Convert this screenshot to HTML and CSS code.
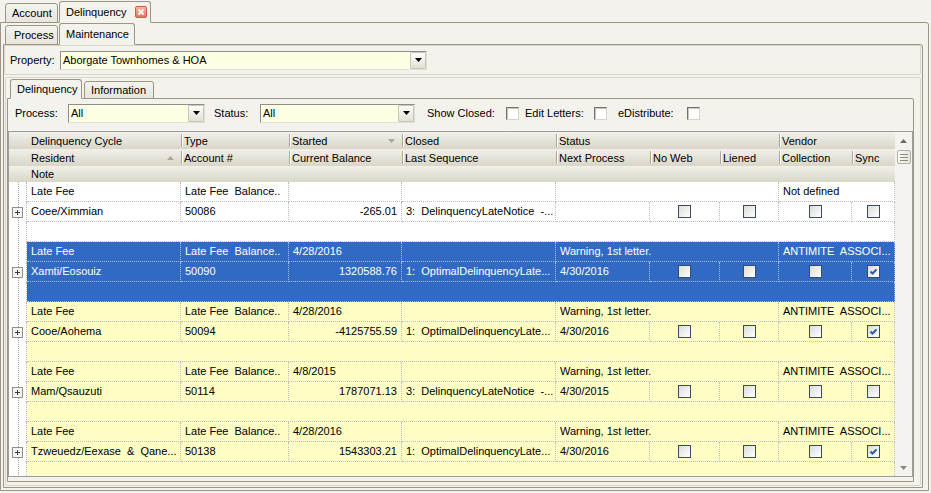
FILE: index.html
```html
<!DOCTYPE html>
<html>
<head>
<meta charset="utf-8">
<title>Delinquency</title>
<link rel="stylesheet" href="styles.css">
</head>
<body>
<div class="app">
  <div class="tabstrip t1">
    <div class="tab tab-account">Account</div>
    <div class="tab sel tab-delinq">Delinquency<span class="close"><svg width="12" height="12" viewBox="0 0 12 12"><defs><linearGradient id="cg" x1="0" y1="0" x2="0" y2="1"><stop offset="0" stop-color="#f6b8a8"/><stop offset="1" stop-color="#e2735e"/></linearGradient></defs><rect x="0.5" y="0.5" width="11" height="11" rx="1.5" fill="url(#cg)" stroke="#c95f4b"/><path d="M3.5 3.5L8.5 8.5M8.5 3.5L3.5 8.5" stroke="#fff" stroke-width="1.8"/></svg></span></div>
  </div>
  <div class="panel p1">
    <div class="tabstrip t2">
      <div class="tab tab-process">Process</div>
      <div class="tab sel tab-maint">Maintenance</div>
    </div>
    <div class="panel p2">
      <div class="propbox">
        <span class="lbl lbl-prop">Property:</span>
        <div class="combo combo-prop"><span class="combo-text">Aborgate Townhomes &amp; HOA</span><span class="drop"><svg width="7" height="4" viewBox="0 0 7 4"><path d="M0 0H7L3.5 4Z" fill="#000"/></svg></span></div>
      </div>
      <div class="lowerbox">
        <div class="tabstrip t3">
          <div class="tab sel tab-dl">Delinquency</div>
          <div class="tab tab-info">Information</div>
        </div>
        <div class="panel p3">
          <div class="filters">
            <span class="lbl lbl-process">Process:</span>
            <div class="combo combo-process"><span class="combo-text">All</span><span class="drop"><svg width="7" height="4" viewBox="0 0 7 4"><path d="M0 0H7L3.5 4Z" fill="#000"/></svg></span></div>
            <span class="lbl lbl-status">Status:</span>
            <div class="combo combo-status"><span class="combo-text">All</span><span class="drop"><svg width="7" height="4" viewBox="0 0 7 4"><path d="M0 0H7L3.5 4Z" fill="#000"/></svg></span></div>
            <span class="lbl lbl-closed">Show Closed:</span>
            <span class="fchk"></span>
            <span class="lbl lbl-edit">Edit Letters:</span>
            <span class="fchk"></span>
            <span class="lbl lbl-edist">eDistribute:</span>
            <span class="fchk"></span>
          </div>
          <div class="grid">
            <div class="gmain">
              <div class="hrow">
                <div class="hc"></div>
                <div class="hc first">Delinquency Cycle</div>
                <div class="hc sep">Type</div>
                <div class="hc sep">Started<svg class="sort" width="7" height="4" viewBox="0 0 7 4"><path d="M0 0H7L3.5 4Z" fill="#aca899"/></svg></div>
                <div class="hc sep">Closed</div>
                <div class="hc sep s3">Status</div>
                <div class="hc sep s2">Vendor</div>
              </div>
              <div class="hrow">
                <div class="hc"></div>
                <div class="hc first">Resident<svg class="sort" width="7" height="4" viewBox="0 0 7 4"><path d="M0 4H7L3.5 0Z" fill="#aca899"/></svg></div>
                <div class="hc sep">Account #</div>
                <div class="hc sep">Current Balance</div>
                <div class="hc sep">Last Sequence</div>
                <div class="hc sep">Next Process</div>
                <div class="hc sep">No Web</div>
                <div class="hc sep">Liened</div>
                <div class="hc sep">Collection</div>
                <div class="hc sep">Sync</div>
              </div>
              <div class="hrow hrow3">
                <div class="hc"></div>
                <div class="hc first s9">Note</div>
              </div>

              <div class="rec">
                <div class="rrow">
                  <div class="ind"></div>
                  <div class="c">Late Fee</div>
                  <div class="c">Late Fee&nbsp; Balance..</div>
                  <div class="c"></div>
                  <div class="c"></div>
                  <div class="c s3"></div>
                  <div class="c s2">Not defined</div>
                </div>
                <div class="rrow">
                  <div class="ind"><svg class="plus" width="11" height="11" viewBox="0 0 11 11"><rect x="0.5" y="0.5" width="10" height="10" fill="#f4f4f0" stroke="#8f8f8f"/><path d="M3 5.5H8M5.5 3V8" stroke="#3a3a3a"/></svg></div>
                  <div class="c">Coee/Ximmian</div>
                  <div class="c">50086</div>
                  <div class="c num">-265.01</div>
                  <div class="c">3:&nbsp; DelinquencyLateNotice&nbsp; -...</div>
                  <div class="c"></div>
                  <div class="c cb"><span class="chk"></span></div>
                  <div class="c cb"><span class="chk"></span></div>
                  <div class="c cb"><span class="chk"></span></div>
                  <div class="c cb"><span class="chk"></span></div>
                </div>
                <div class="rrow">
                  <div class="ind"></div>
                  <div class="c s9"></div>
                </div>
              </div>

              <div class="rec sel">
                <div class="rrow">
                  <div class="ind"></div>
                  <div class="c">Late Fee</div>
                  <div class="c">Late Fee&nbsp; Balance..</div>
                  <div class="c">4/28/2016</div>
                  <div class="c"></div>
                  <div class="c s3">Warning, 1st letter.</div>
                  <div class="c s2">ANTIMITE&nbsp; ASSOCI...</div>
                </div>
                <div class="rrow">
                  <div class="ind"><svg class="plus" width="11" height="11" viewBox="0 0 11 11"><rect x="0.5" y="0.5" width="10" height="10" fill="#f4f4f0" stroke="#8f8f8f"/><path d="M3 5.5H8M5.5 3V8" stroke="#3a3a3a"/></svg></div>
                  <div class="c">Xamti/Eosouiz</div>
                  <div class="c">50090</div>
                  <div class="c num">1320588.76</div>
                  <div class="c">1:&nbsp; OptimalDelinquencyLate...</div>
                  <div class="c">4/30/2016</div>
                  <div class="c cb"><span class="chk"></span></div>
                  <div class="c cb"><span class="chk"></span></div>
                  <div class="c cb"><span class="chk"></span></div>
                  <div class="c cb"><span class="chk"><svg width="11" height="11" viewBox="0 0 11 11"><path d="M2.5 5.5L4.5 7.5L8.5 3.5" fill="none" stroke="#2a5cb8" stroke-width="2"/></svg></span></div>
                </div>
                <div class="rrow">
                  <div class="ind"></div>
                  <div class="c s9"></div>
                </div>
              </div>

              <div class="rec yel">
                <div class="rrow">
                  <div class="ind"></div>
                  <div class="c">Late Fee</div>
                  <div class="c">Late Fee&nbsp; Balance..</div>
                  <div class="c">4/28/2016</div>
                  <div class="c"></div>
                  <div class="c s3">Warning, 1st letter.</div>
                  <div class="c s2">ANTIMITE&nbsp; ASSOCI...</div>
                </div>
                <div class="rrow">
                  <div class="ind"><svg class="plus" width="11" height="11" viewBox="0 0 11 11"><rect x="0.5" y="0.5" width="10" height="10" fill="#f4f4f0" stroke="#8f8f8f"/><path d="M3 5.5H8M5.5 3V8" stroke="#3a3a3a"/></svg></div>
                  <div class="c">Cooe/Aohema</div>
                  <div class="c">50094</div>
                  <div class="c num">-4125755.59</div>
                  <div class="c">1:&nbsp; OptimalDelinquencyLate...</div>
                  <div class="c">4/30/2016</div>
                  <div class="c cb"><span class="chk"></span></div>
                  <div class="c cb"><span class="chk"></span></div>
                  <div class="c cb"><span class="chk"></span></div>
                  <div class="c cb"><span class="chk"><svg width="11" height="11" viewBox="0 0 11 11"><path d="M2.5 5.5L4.5 7.5L8.5 3.5" fill="none" stroke="#2a5cb8" stroke-width="2"/></svg></span></div>
                </div>
                <div class="rrow">
                  <div class="ind"></div>
                  <div class="c s9"></div>
                </div>
              </div>

              <div class="rec yel">
                <div class="rrow">
                  <div class="ind"></div>
                  <div class="c">Late Fee</div>
                  <div class="c">Late Fee&nbsp; Balance..</div>
                  <div class="c">4/8/2015</div>
                  <div class="c"></div>
                  <div class="c s3">Warning, 1st letter.</div>
                  <div class="c s2">ANTIMITE&nbsp; ASSOCI...</div>
                </div>
                <div class="rrow">
                  <div class="ind"><svg class="plus" width="11" height="11" viewBox="0 0 11 11"><rect x="0.5" y="0.5" width="10" height="10" fill="#f4f4f0" stroke="#8f8f8f"/><path d="M3 5.5H8M5.5 3V8" stroke="#3a3a3a"/></svg></div>
                  <div class="c">Mam/Qsauzuti</div>
                  <div class="c">50114</div>
                  <div class="c num">1787071.13</div>
                  <div class="c">3:&nbsp; DelinquencyLateNotice&nbsp; -...</div>
                  <div class="c">4/30/2015</div>
                  <div class="c cb"><span class="chk"></span></div>
                  <div class="c cb"><span class="chk"></span></div>
                  <div class="c cb"><span class="chk"></span></div>
                  <div class="c cb"><span class="chk"></span></div>
                </div>
                <div class="rrow">
                  <div class="ind"></div>
                  <div class="c s9"></div>
                </div>
              </div>

              <div class="rec yel">
                <div class="rrow">
                  <div class="ind"></div>
                  <div class="c">Late Fee</div>
                  <div class="c">Late Fee&nbsp; Balance..</div>
                  <div class="c">4/28/2016</div>
                  <div class="c"></div>
                  <div class="c s3">Warning, 1st letter.</div>
                  <div class="c s2">ANTIMITE&nbsp; ASSOCI...</div>
                </div>
                <div class="rrow">
                  <div class="ind"><svg class="plus" width="11" height="11" viewBox="0 0 11 11"><rect x="0.5" y="0.5" width="10" height="10" fill="#f4f4f0" stroke="#8f8f8f"/><path d="M3 5.5H8M5.5 3V8" stroke="#3a3a3a"/></svg></div>
                  <div class="c">Tzweuedz/Eexase&nbsp; &amp;&nbsp; Qane...</div>
                  <div class="c">50138</div>
                  <div class="c num">1543303.21</div>
                  <div class="c">1:&nbsp; OptimalDelinquencyLate...</div>
                  <div class="c">4/30/2016</div>
                  <div class="c cb"><span class="chk"></span></div>
                  <div class="c cb"><span class="chk"></span></div>
                  <div class="c cb"><span class="chk"></span></div>
                  <div class="c cb"><span class="chk"><svg width="11" height="11" viewBox="0 0 11 11"><path d="M2.5 5.5L4.5 7.5L8.5 3.5" fill="none" stroke="#2a5cb8" stroke-width="2"/></svg></span></div>
                </div>
                <div class="rrow">
                  <div class="ind"></div>
                  <div class="c s9"></div>
                </div>
              </div>
            </div>
            <div class="sb">
              <div class="sbbtn"><svg width="7" height="4" viewBox="0 0 7 4"><path d="M0 4H7L3.5 0Z" fill="#6f6d66"/></svg></div>
              <div class="thumb"><svg width="8" height="7" viewBox="0 0 8 7"><path d="M0 0.5H8M0 3.5H8M0 6.5H8" stroke="#8b887c"/></svg></div>
              <div class="sbspace"></div>
              <div class="sbbtn"><svg width="7" height="4" viewBox="0 0 7 4"><path d="M0 0H7L3.5 4Z" fill="#8b887c"/></svg></div>
            </div>
          </div>
        </div>
      </div>
    </div>
  </div>
</div>
</body>
</html>
```

FILE: styles.css
```css
* { box-sizing: border-box; }
html, body { margin: 0; padding: 0; }
body {
  background: #f3f2ec;
  font-family: "Liberation Sans", Arial, sans-serif;
  font-size: 11px;
  color: #000;
}
.app {
  width: 931px;
  height: 493px;
  overflow: hidden;
  background: #f3f2ec;
}

/* tabs */
.tabstrip {
  display: flex;
  align-items: flex-end;
  position: relative;
  z-index: 2;
  margin-bottom: -1px;
}
.tab {
  display: flex;
  align-items: center;
  border: 1px solid #9c9585;
  border-radius: 3px 3px 0 0;
  background: linear-gradient(#f4f3ee, #e7e5dc);
  white-space: nowrap;
  padding-left: 6px;
  padding-bottom: 1px;
}
.tab.sel {
  background: #f3f2ec;
  border-bottom-color: #f3f2ec;
}
.t1 { height: 23px; padding-left: 5px; }
.tab-account { width: 53px; height: 20px; }
.tab-delinq { width: 92px; height: 22px; margin-left: 1px; }
.close { margin-left: auto; margin-right: 3px; display: flex; }

.t2 { height: 22px; padding-left: 2px; }
.tab-process { width: 53px; height: 20px; padding-left: 8px; }
.tab-maint { width: 76px; height: 22px; margin-left: 1px; padding-bottom: 0; }

.t3 { height: 21px; padding-left: 3px; }
.tab-dl { width: 72px; height: 20px; }
.tab-info { width: 70px; height: 18px; margin-left: 2px; padding-bottom: 1px; }

/* panels */
.panel { border: 1px solid #9c9585; border-radius: 0 3px 0 0; }
.p1 {
  height: 469px;
  margin-right: 2px;
  padding: 0 5px 2px 2px;
}
.p2 { height: 444px; }
.propbox {
  height: 30px;
  display: flex;
  align-items: center;
  padding-left: 5px;
  border: 1px solid #d9d5c8;
  border-radius: 2px;
  margin: 0 1px 0 0;
}
.lowerbox {
  margin: 2px 1px 0 1px;
  height: 409px;
  border: 1px solid #d9d5c8;
  border-radius: 2px;
  padding: 0 6px 3px 1px;
}
.p3 { height: 384px; border-radius: 0 2px 0 0; }

/* labels & combos */
.lbl { white-space: nowrap; }
.lbl-prop { width: 50px; }
.combo {
  display: flex;
  align-items: stretch;
  height: 19px;
  border: 1px solid;
  border-color: #8e8d88 #e2dfd4 #e2dfd4 #8e8d88;
  background: #ffffe3;
}
.combo-text { padding-left: 2px; line-height: 17px; flex: 1; white-space: nowrap; }
.drop {
  width: 16px;
  border: 1px solid #c9c6b9;
  border-radius: 1px;
  background: linear-gradient(#fdfdfb, #e3e0d4);
  display: flex;
  align-items: center;
  justify-content: center;
}
.combo-prop { width: 367px; }

.filters {
  height: 32px;
  display: flex;
  align-items: center;
  padding: 0 0 4px 7px;
}
.lbl-process { width: 53px; }
.combo-process { width: 137px; }
.lbl-status { width: 46px; margin-left: 9px; }
.combo-status { width: 155px; }
.lbl-closed { width: 79px; margin-left: 12px; }
.lbl-edit { width: 69px; margin-left: 6px; }
.lbl-edist { width: 69px; margin-left: 11px; }
.fchk {
  width: 13px;
  height: 13px;
  border: 1px solid;
  border-color: #707070 #d6d3ca #d6d3ca #707070;
  background: #fff;
  box-shadow: inset 1px 1px 0 #c8c6bd;
}

/* grid */
.grid {
  width: 905px;
  height: 346px;
  border: 1px solid #9d9d9d;
  display: flex;
  background: #fff;
}
.gmain {
  width: 886px;
  height: 344px;
  overflow: hidden;
}
.hrow, .rrow {
  display: grid;
  grid-template-columns: 18px 154px 108px 113px 154px 94px 70px 59px 73px 43px;
}
.hrow { height: 17px; }
.hrow3 { height: 16px; }
.hc {
  background: linear-gradient(#f1f0e9, #d9d6c8);
  display: flex;
  align-items: center;
  padding-left: 3px;
  white-space: nowrap;
  overflow: hidden;
}
.hc.first { padding-left: 4px; }
.hc.sep {
  background:
    linear-gradient(#aca899, #aca899) 0 2px / 1px 13px no-repeat,
    linear-gradient(#ffffff, #ffffff) 1px 2px / 1px 13px no-repeat,
    linear-gradient(#f1f0e9, #d9d6c8);
}
.sort { margin-left: auto; margin-right: 7px; flex: none; }
.s2 { grid-column: span 2; }
.s3 { grid-column: span 3; }
.s9 { grid-column: span 9; }

.rrow { height: 20px; }
.ind {
  background-color: #fff;
  background-image: linear-gradient(#a3a3a3 50%, transparent 50%);
  background-size: 1px 2px;
  background-position: 9px 0;
  background-repeat: repeat-y;
  border-right: 1px dotted #b8b8b8;
  display: flex;
  align-items: center;
  padding-left: 3px;
}
.plus { display: block; }
.c {
  border-right: 1px dotted #bdbdbd;
  border-bottom: 1px dotted #bdbdbd;
  padding: 0 4px;
  line-height: 19px;
  white-space: nowrap;
  overflow: hidden;
  background: #fff;
}
.num { text-align: right; }
.cb { display: flex; align-items: center; justify-content: center; padding: 0; }
.chk {
  width: 13px;
  height: 13px;
  border: 1px solid #3b4c60;
  background: linear-gradient(135deg, #dcdcd6, #ffffff);
  display: flex;
  align-items: center;
  justify-content: center;
}
.rec.yel .c { background: #fdfdc4; }
.rec.sel .c {
  background: #316ac5;
  color: #fff;
  border-color: rgba(255, 255, 255, 0.6);
}

/* scrollbar */
.sb {
  width: 17px;
  height: 344px;
  background: #f4f3ef;
  display: flex;
  flex-direction: column;
  align-items: center;
}
.sbbtn {
  width: 17px;
  height: 17px;
  display: flex;
  align-items: center;
  justify-content: center;
}
.thumb {
  width: 14px;
  height: 14px;
  margin-top: 1px;
  border: 1px solid #b3b0a4;
  border-radius: 2px;
  background: linear-gradient(90deg, #fbfaf7, #e6e4da);
  display: flex;
  align-items: center;
  justify-content: center;
}
.sbspace { flex: 1; }
```
